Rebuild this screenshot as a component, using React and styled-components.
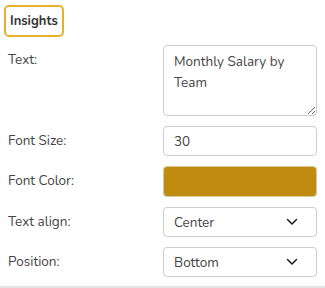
import styled, { createGlobalStyle } from 'styled-components'

const GlobalStyle = createGlobalStyle`
  body {
    margin: 0;
    background: #fff;
    font-family: 'Nunito', 'Lato', 'Liberation Sans', sans-serif;
    color: #444;
  }
`

const fields = [
  { label: 'Text:', type: 'textarea', value: 'Monthly Salary by Team' },
  { label: 'Font Size:', type: 'input', value: '30' },
  { label: 'Font Color:', type: 'color', value: '#bf8b10' },
  { label: 'Text align:', type: 'select', value: 'Center' },
  { label: 'Position:', type: 'select', value: 'Bottom' },
]

const Chevron = () => (
  <svg width="12" height="8" viewBox="0 0 12 8" fill="none">
    <path d="M1.5 1.5 L6 6 L10.5 1.5" stroke="#222" strokeWidth="1.6" strokeLinecap="round" strokeLinejoin="round" />
  </svg>
)

const App = () => {
  return (
    <>
      <GlobalStyle />
      <Panel>
        <TabBar>
          <Tab>Insights</Tab>
        </TabBar>
        <Form>
          {fields.map((f) => (
            <Row key={f.label}>
              <Label>{f.label}</Label>
              {f.type === 'textarea' && <TextArea defaultValue={f.value} />}
              {f.type === 'input' && <Input type="text" defaultValue={f.value} />}
              {f.type === 'color' && <Swatch color={f.value} />}
              {f.type === 'select' && (
                <SelectBox>
                  <span>{f.value}</span>
                  <Chevron />
                </SelectBox>
              )}
            </Row>
          ))}
        </Form>
      </Panel>
    </>
  )
}

export default App

const Panel = styled.div`
  width: 325px;
  height: 288px;
  box-sizing: border-box;
  border-bottom: 2px solid #e2e2e2;
  overflow: hidden;
`

const TabBar = styled.div`
  display: flex;
  padding: 5px 0 0 4px;
`

const Tab = styled.div`
  height: 32px;
  box-sizing: border-box;
  padding: 0 4px;
  display: flex;
  align-items: center;
  border: 2px solid #e8b02c;
  border-radius: 5px;
  font-size: 13px;
  font-weight: 700;
  color: #333;
`

const Form = styled.div`
  display: flex;
  flex-direction: column;
  gap: 10px;
  padding: 8px 8px 0 8px;
`

const Row = styled.div`
  display: grid;
  grid-template-columns: 155px 154px;
  align-items: start;
`

const Label = styled.div`
  font-size: 13.5px;
  line-height: 30px;
  color: #444;
`

const fieldBase = `
  box-sizing: border-box;
  width: 154px;
  border: 1px solid #cdcdcd;
  border-radius: 4px;
  font-family: 'Nunito', 'Lato', 'Liberation Sans', sans-serif;
  font-size: 13.5px;
  color: #444;
  background: #fff;
  outline: none;
`

const TextArea = styled.textarea`
  ${fieldBase}
  height: 71px;
  padding: 5px 10px;
  line-height: 21px;
  resize: both;
  margin: 0;
  display: block;
`

const Input = styled.input`
  ${fieldBase}
  height: 30px;
  padding: 0 10px;
  margin: 0;
`

const Swatch = styled.div`
  ${fieldBase}
  height: 31px;
  background: ${(p) => p.color};
  border-color: #d8c89a;
`

const SelectBox = styled.div`
  ${fieldBase}
  height: 30px;
  padding: 0 18px 0 10px;
  display: flex;
  align-items: center;
  justify-content: space-between;
`
